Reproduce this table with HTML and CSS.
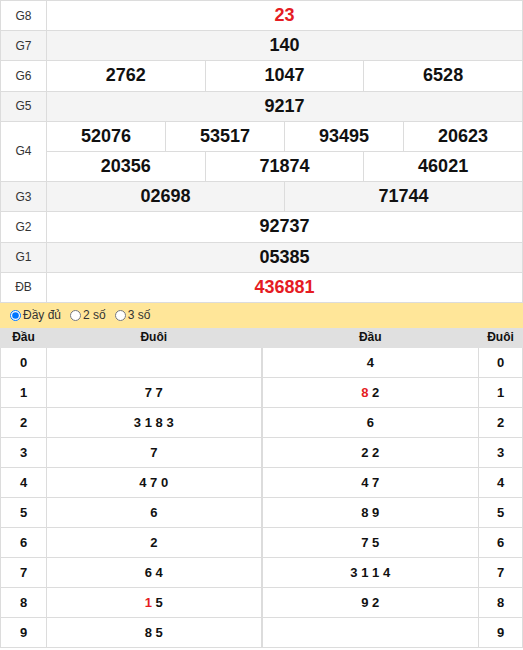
FILE: index.html
```html
<!DOCTYPE html>
<html lang="vi">
<head>
<meta charset="utf-8">
<title>KQXS</title>
<link rel="stylesheet" href="styles.css">
</head>
<body>
<table class="kq">
  <colgroup><col class="c-lbl"><col span="12"></colgroup>
  <tr><td class="lbl">G8</td><td colspan="12" class="num red">23</td></tr>
  <tr class="alt"><td class="lbl">G7</td><td colspan="12" class="num">140</td></tr>
  <tr><td class="lbl">G6</td><td colspan="4" class="num">2762</td><td colspan="4" class="num">1047</td><td colspan="4" class="num">6528</td></tr>
  <tr class="alt"><td class="lbl">G5</td><td colspan="12" class="num">9217</td></tr>
  <tr><td class="lbl" rowspan="2">G4</td><td colspan="3" class="num">52076</td><td colspan="3" class="num">53517</td><td colspan="3" class="num">93495</td><td colspan="3" class="num">20623</td></tr>
  <tr><td colspan="4" class="num">20356</td><td colspan="4" class="num">71874</td><td colspan="4" class="num">46021</td></tr>
  <tr class="alt"><td class="lbl">G3</td><td colspan="6" class="num">02698</td><td colspan="6" class="num">71744</td></tr>
  <tr><td class="lbl">G2</td><td colspan="12" class="num">92737</td></tr>
  <tr class="alt"><td class="lbl">G1</td><td colspan="12" class="num">05385</td></tr>
  <tr><td class="lbl">ĐB</td><td colspan="12" class="num red">436881</td></tr>
</table>
<div class="opts">
  <label class="opt"><input type="radio" name="mode" checked> Đầy đủ</label>
  <label class="opt"><input type="radio" name="mode"> 2 số</label>
  <label class="opt"><input type="radio" name="mode"> 3 số</label>
</div>
<div class="loto">
  <table class="lt left">
    <colgroup><col class="c-dau"><col></colgroup>
    <tr><th>Đầu</th><th>Đuôi</th></tr>
    <tr><td>0</td><td></td></tr>
    <tr><td>1</td><td>7 7</td></tr>
    <tr><td>2</td><td>3 1 8 3</td></tr>
    <tr><td>3</td><td>7</td></tr>
    <tr><td>4</td><td>4 7 0</td></tr>
    <tr><td>5</td><td>6</td></tr>
    <tr><td>6</td><td>2</td></tr>
    <tr><td>7</td><td>6 4</td></tr>
    <tr><td>8</td><td><span class="red">1</span> 5</td></tr>
    <tr><td>9</td><td>8 5</td></tr>
  </table>
  <table class="lt right">
    <colgroup><col><col class="c-duoi"></colgroup>
    <tr><th>Đầu</th><th>Đuôi</th></tr>
    <tr><td>4</td><td>0</td></tr>
    <tr><td><span class="red">8</span> 2</td><td>1</td></tr>
    <tr><td>6</td><td>2</td></tr>
    <tr><td>2 2</td><td>3</td></tr>
    <tr><td>4 7</td><td>4</td></tr>
    <tr><td>8 9</td><td>5</td></tr>
    <tr><td>7 5</td><td>6</td></tr>
    <tr><td>3 1 1 4</td><td>7</td></tr>
    <tr><td>9 2</td><td>8</td></tr>
    <tr><td></td><td>9</td></tr>
  </table>
</div>
</body>
</html>
```
FILE: styles.css
```css
html, body {
  margin: 0;
  padding: 0;
  background: #fff;
}
body {
  font-family: "Liberation Sans", Arial, sans-serif;
  color: #111;
  width: 523px;
}
.kq {
  width: 523px;
  border-collapse: collapse;
  table-layout: fixed;
}
.kq col.c-lbl {
  width: 46px;
}
.kq td {
  border: 1px solid #dcdcdc;
  height: 29.2px;
  padding: 0;
  text-align: center;
  vertical-align: middle;
}
.kq tr.alt td {
  background: #f4f4f4;
}
.kq .lbl {
  font-size: 12px;
  color: #333;
}
.kq .num {
  font-size: 18px;
  font-weight: bold;
  color: #111;
}
.red {
  color: #e51c23 !important;
}
.opts {
  display: flex;
  align-items: center;
  height: 25px;
  background: #ffe699;
  padding-left: 10px;
  font-size: 12px;
  color: #333;
}
.opt {
  display: flex;
  align-items: center;
  margin-right: 9px;
}
.opt input {
  width: 11px;
  height: 11px;
  margin: 0 2px 0 0;
}
.loto {
  display: flex;
}
.lt {
  width: 50%;
  border-collapse: collapse;
  table-layout: fixed;
}
.lt col.c-dau {
  width: 46px;
}
.lt col.c-duoi {
  width: 44px;
}
.lt th {
  background: #e0e0e0;
  height: 19px;
  padding: 0;
  font-size: 12px;
  font-weight: bold;
  color: #111;
  border: 1px solid #e0e0e0;
  border-top: 0;
}
.lt td {
  border: 1px solid #dcdcdc;
  height: 29px;
  padding: 0;
  text-align: center;
  font-size: 13px;
  font-weight: bold;
  color: #111;
}
```
